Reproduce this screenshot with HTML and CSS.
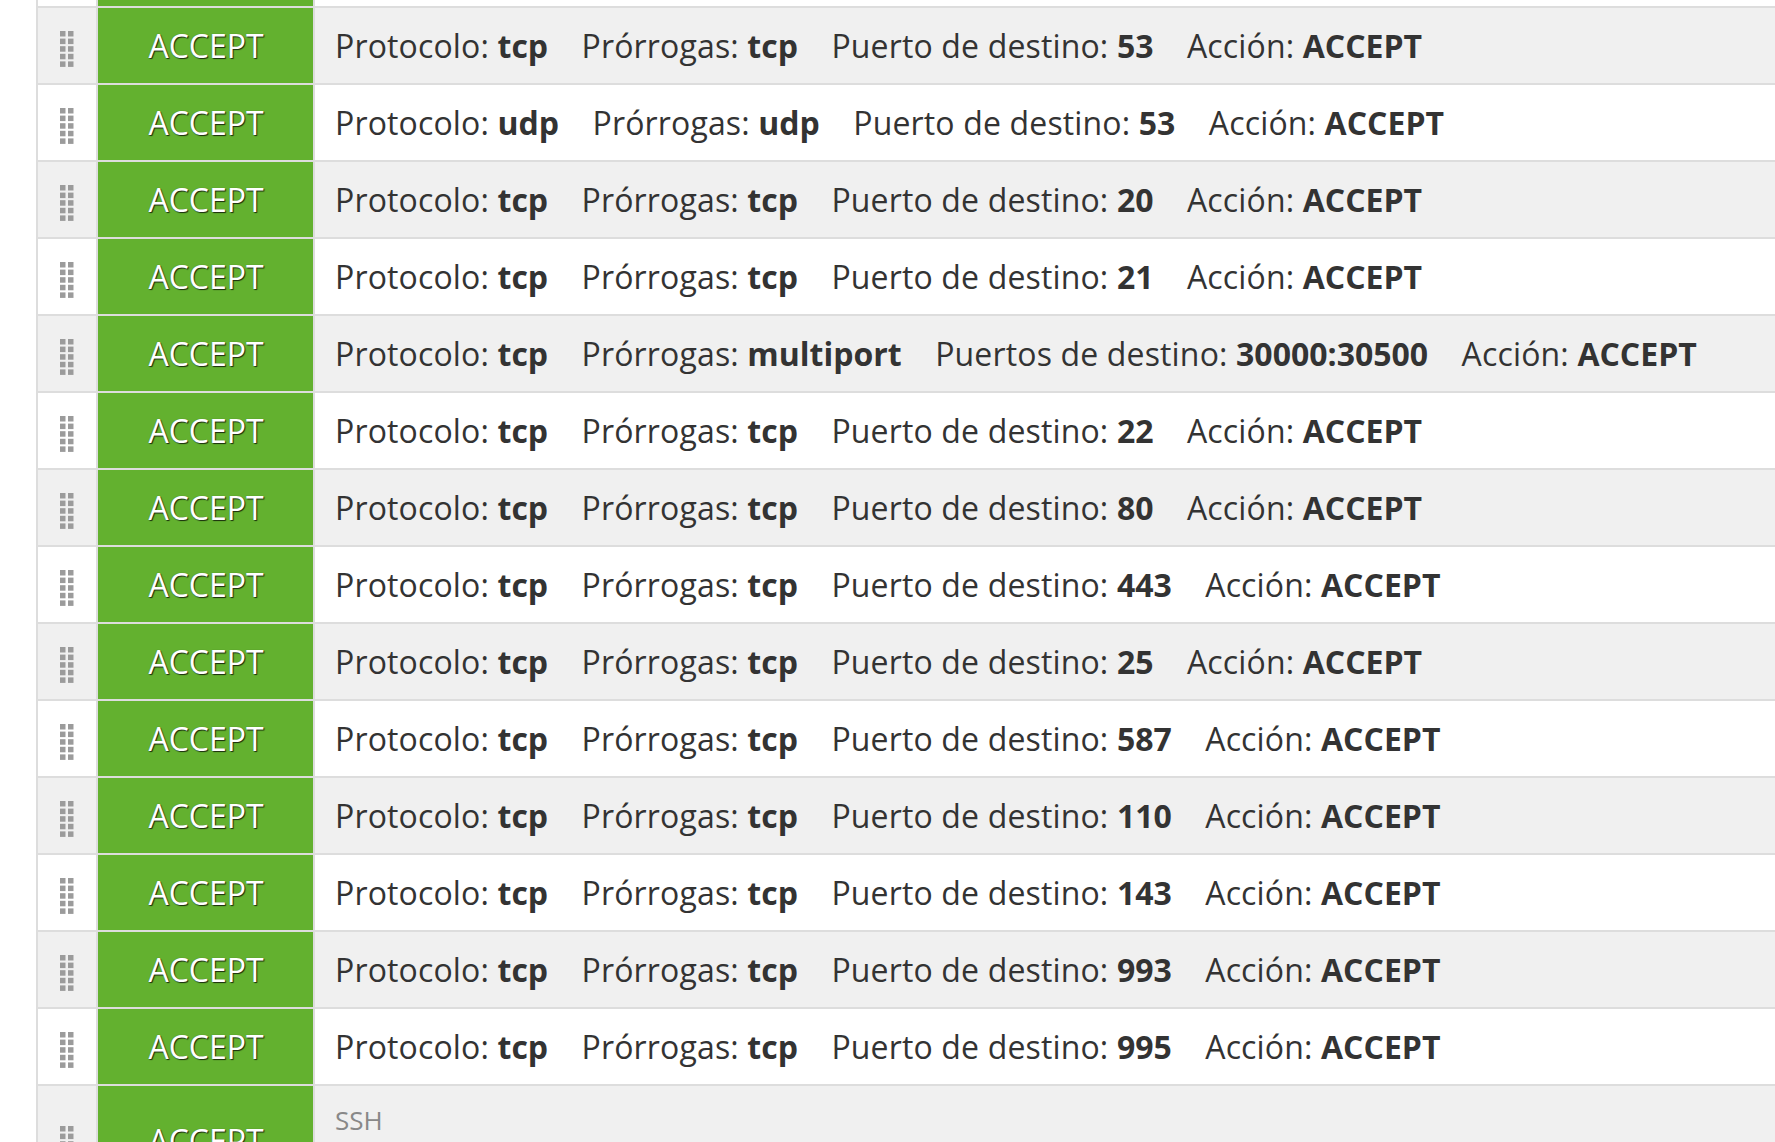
FILE: index.html
```html
<!DOCTYPE html>
<html lang="es">
<head>
<meta charset="utf-8">
<title>Reglas</title>
<link rel="stylesheet" href="styles.css">
</head>
<body>
<div class="rules">
  <div class="rule rule-cut"><div class="handle"></div><div class="target"></div><div class="desc"></div></div>

  <div class="rule"><div class="handle"><svg class="grip" viewBox="0 0 14 36" width="14" height="36"><g fill="#9b9b9b"><rect x="0" y="0" width="5.5" height="5.5"/><rect x="8" y="0" width="5.5" height="5.5"/><rect x="0" y="7.6" width="5.5" height="5.5"/><rect x="8" y="7.6" width="5.5" height="5.5"/><rect x="0" y="15.2" width="5.5" height="5.5"/><rect x="8" y="15.2" width="5.5" height="5.5"/><rect x="0" y="22.8" width="5.5" height="5.5"/><rect x="8" y="22.8" width="5.5" height="5.5"/><rect x="0" y="30.4" width="5.5" height="5.5"/><rect x="8" y="30.4" width="5.5" height="5.5"/></g></svg></div><div class="target">ACCEPT</div><div class="desc"><p class="line"><span class="kv">Protocolo: <b>tcp</b></span> <span class="kv">Prórrogas: <b>tcp</b></span> <span class="kv">Puerto de destino: <b>53</b></span> <span class="kv">Acción: <b>ACCEPT</b></span></p></div></div>

  <div class="rule"><div class="handle"><svg class="grip" viewBox="0 0 14 36" width="14" height="36"><g fill="#9b9b9b"><rect x="0" y="0" width="5.5" height="5.5"/><rect x="8" y="0" width="5.5" height="5.5"/><rect x="0" y="7.6" width="5.5" height="5.5"/><rect x="8" y="7.6" width="5.5" height="5.5"/><rect x="0" y="15.2" width="5.5" height="5.5"/><rect x="8" y="15.2" width="5.5" height="5.5"/><rect x="0" y="22.8" width="5.5" height="5.5"/><rect x="8" y="22.8" width="5.5" height="5.5"/><rect x="0" y="30.4" width="5.5" height="5.5"/><rect x="8" y="30.4" width="5.5" height="5.5"/></g></svg></div><div class="target">ACCEPT</div><div class="desc"><p class="line"><span class="kv">Protocolo: <b>udp</b></span> <span class="kv">Prórrogas: <b>udp</b></span> <span class="kv">Puerto de destino: <b>53</b></span> <span class="kv">Acción: <b>ACCEPT</b></span></p></div></div>

  <div class="rule"><div class="handle"><svg class="grip" viewBox="0 0 14 36" width="14" height="36"><g fill="#9b9b9b"><rect x="0" y="0" width="5.5" height="5.5"/><rect x="8" y="0" width="5.5" height="5.5"/><rect x="0" y="7.6" width="5.5" height="5.5"/><rect x="8" y="7.6" width="5.5" height="5.5"/><rect x="0" y="15.2" width="5.5" height="5.5"/><rect x="8" y="15.2" width="5.5" height="5.5"/><rect x="0" y="22.8" width="5.5" height="5.5"/><rect x="8" y="22.8" width="5.5" height="5.5"/><rect x="0" y="30.4" width="5.5" height="5.5"/><rect x="8" y="30.4" width="5.5" height="5.5"/></g></svg></div><div class="target">ACCEPT</div><div class="desc"><p class="line"><span class="kv">Protocolo: <b>tcp</b></span> <span class="kv">Prórrogas: <b>tcp</b></span> <span class="kv">Puerto de destino: <b>20</b></span> <span class="kv">Acción: <b>ACCEPT</b></span></p></div></div>

  <div class="rule"><div class="handle"><svg class="grip" viewBox="0 0 14 36" width="14" height="36"><g fill="#9b9b9b"><rect x="0" y="0" width="5.5" height="5.5"/><rect x="8" y="0" width="5.5" height="5.5"/><rect x="0" y="7.6" width="5.5" height="5.5"/><rect x="8" y="7.6" width="5.5" height="5.5"/><rect x="0" y="15.2" width="5.5" height="5.5"/><rect x="8" y="15.2" width="5.5" height="5.5"/><rect x="0" y="22.8" width="5.5" height="5.5"/><rect x="8" y="22.8" width="5.5" height="5.5"/><rect x="0" y="30.4" width="5.5" height="5.5"/><rect x="8" y="30.4" width="5.5" height="5.5"/></g></svg></div><div class="target">ACCEPT</div><div class="desc"><p class="line"><span class="kv">Protocolo: <b>tcp</b></span> <span class="kv">Prórrogas: <b>tcp</b></span> <span class="kv">Puerto de destino: <b>21</b></span> <span class="kv">Acción: <b>ACCEPT</b></span></p></div></div>

  <div class="rule"><div class="handle"><svg class="grip" viewBox="0 0 14 36" width="14" height="36"><g fill="#9b9b9b"><rect x="0" y="0" width="5.5" height="5.5"/><rect x="8" y="0" width="5.5" height="5.5"/><rect x="0" y="7.6" width="5.5" height="5.5"/><rect x="8" y="7.6" width="5.5" height="5.5"/><rect x="0" y="15.2" width="5.5" height="5.5"/><rect x="8" y="15.2" width="5.5" height="5.5"/><rect x="0" y="22.8" width="5.5" height="5.5"/><rect x="8" y="22.8" width="5.5" height="5.5"/><rect x="0" y="30.4" width="5.5" height="5.5"/><rect x="8" y="30.4" width="5.5" height="5.5"/></g></svg></div><div class="target">ACCEPT</div><div class="desc"><p class="line"><span class="kv">Protocolo: <b>tcp</b></span> <span class="kv">Prórrogas: <b>multiport</b></span> <span class="kv">Puertos de destino: <b>30000:30500</b></span> <span class="kv">Acción: <b>ACCEPT</b></span></p></div></div>

  <div class="rule"><div class="handle"><svg class="grip" viewBox="0 0 14 36" width="14" height="36"><g fill="#9b9b9b"><rect x="0" y="0" width="5.5" height="5.5"/><rect x="8" y="0" width="5.5" height="5.5"/><rect x="0" y="7.6" width="5.5" height="5.5"/><rect x="8" y="7.6" width="5.5" height="5.5"/><rect x="0" y="15.2" width="5.5" height="5.5"/><rect x="8" y="15.2" width="5.5" height="5.5"/><rect x="0" y="22.8" width="5.5" height="5.5"/><rect x="8" y="22.8" width="5.5" height="5.5"/><rect x="0" y="30.4" width="5.5" height="5.5"/><rect x="8" y="30.4" width="5.5" height="5.5"/></g></svg></div><div class="target">ACCEPT</div><div class="desc"><p class="line"><span class="kv">Protocolo: <b>tcp</b></span> <span class="kv">Prórrogas: <b>tcp</b></span> <span class="kv">Puerto de destino: <b>22</b></span> <span class="kv">Acción: <b>ACCEPT</b></span></p></div></div>

  <div class="rule"><div class="handle"><svg class="grip" viewBox="0 0 14 36" width="14" height="36"><g fill="#9b9b9b"><rect x="0" y="0" width="5.5" height="5.5"/><rect x="8" y="0" width="5.5" height="5.5"/><rect x="0" y="7.6" width="5.5" height="5.5"/><rect x="8" y="7.6" width="5.5" height="5.5"/><rect x="0" y="15.2" width="5.5" height="5.5"/><rect x="8" y="15.2" width="5.5" height="5.5"/><rect x="0" y="22.8" width="5.5" height="5.5"/><rect x="8" y="22.8" width="5.5" height="5.5"/><rect x="0" y="30.4" width="5.5" height="5.5"/><rect x="8" y="30.4" width="5.5" height="5.5"/></g></svg></div><div class="target">ACCEPT</div><div class="desc"><p class="line"><span class="kv">Protocolo: <b>tcp</b></span> <span class="kv">Prórrogas: <b>tcp</b></span> <span class="kv">Puerto de destino: <b>80</b></span> <span class="kv">Acción: <b>ACCEPT</b></span></p></div></div>

  <div class="rule"><div class="handle"><svg class="grip" viewBox="0 0 14 36" width="14" height="36"><g fill="#9b9b9b"><rect x="0" y="0" width="5.5" height="5.5"/><rect x="8" y="0" width="5.5" height="5.5"/><rect x="0" y="7.6" width="5.5" height="5.5"/><rect x="8" y="7.6" width="5.5" height="5.5"/><rect x="0" y="15.2" width="5.5" height="5.5"/><rect x="8" y="15.2" width="5.5" height="5.5"/><rect x="0" y="22.8" width="5.5" height="5.5"/><rect x="8" y="22.8" width="5.5" height="5.5"/><rect x="0" y="30.4" width="5.5" height="5.5"/><rect x="8" y="30.4" width="5.5" height="5.5"/></g></svg></div><div class="target">ACCEPT</div><div class="desc"><p class="line"><span class="kv">Protocolo: <b>tcp</b></span> <span class="kv">Prórrogas: <b>tcp</b></span> <span class="kv">Puerto de destino: <b>443</b></span> <span class="kv">Acción: <b>ACCEPT</b></span></p></div></div>

  <div class="rule"><div class="handle"><svg class="grip" viewBox="0 0 14 36" width="14" height="36"><g fill="#9b9b9b"><rect x="0" y="0" width="5.5" height="5.5"/><rect x="8" y="0" width="5.5" height="5.5"/><rect x="0" y="7.6" width="5.5" height="5.5"/><rect x="8" y="7.6" width="5.5" height="5.5"/><rect x="0" y="15.2" width="5.5" height="5.5"/><rect x="8" y="15.2" width="5.5" height="5.5"/><rect x="0" y="22.8" width="5.5" height="5.5"/><rect x="8" y="22.8" width="5.5" height="5.5"/><rect x="0" y="30.4" width="5.5" height="5.5"/><rect x="8" y="30.4" width="5.5" height="5.5"/></g></svg></div><div class="target">ACCEPT</div><div class="desc"><p class="line"><span class="kv">Protocolo: <b>tcp</b></span> <span class="kv">Prórrogas: <b>tcp</b></span> <span class="kv">Puerto de destino: <b>25</b></span> <span class="kv">Acción: <b>ACCEPT</b></span></p></div></div>

  <div class="rule"><div class="handle"><svg class="grip" viewBox="0 0 14 36" width="14" height="36"><g fill="#9b9b9b"><rect x="0" y="0" width="5.5" height="5.5"/><rect x="8" y="0" width="5.5" height="5.5"/><rect x="0" y="7.6" width="5.5" height="5.5"/><rect x="8" y="7.6" width="5.5" height="5.5"/><rect x="0" y="15.2" width="5.5" height="5.5"/><rect x="8" y="15.2" width="5.5" height="5.5"/><rect x="0" y="22.8" width="5.5" height="5.5"/><rect x="8" y="22.8" width="5.5" height="5.5"/><rect x="0" y="30.4" width="5.5" height="5.5"/><rect x="8" y="30.4" width="5.5" height="5.5"/></g></svg></div><div class="target">ACCEPT</div><div class="desc"><p class="line"><span class="kv">Protocolo: <b>tcp</b></span> <span class="kv">Prórrogas: <b>tcp</b></span> <span class="kv">Puerto de destino: <b>587</b></span> <span class="kv">Acción: <b>ACCEPT</b></span></p></div></div>

  <div class="rule"><div class="handle"><svg class="grip" viewBox="0 0 14 36" width="14" height="36"><g fill="#9b9b9b"><rect x="0" y="0" width="5.5" height="5.5"/><rect x="8" y="0" width="5.5" height="5.5"/><rect x="0" y="7.6" width="5.5" height="5.5"/><rect x="8" y="7.6" width="5.5" height="5.5"/><rect x="0" y="15.2" width="5.5" height="5.5"/><rect x="8" y="15.2" width="5.5" height="5.5"/><rect x="0" y="22.8" width="5.5" height="5.5"/><rect x="8" y="22.8" width="5.5" height="5.5"/><rect x="0" y="30.4" width="5.5" height="5.5"/><rect x="8" y="30.4" width="5.5" height="5.5"/></g></svg></div><div class="target">ACCEPT</div><div class="desc"><p class="line"><span class="kv">Protocolo: <b>tcp</b></span> <span class="kv">Prórrogas: <b>tcp</b></span> <span class="kv">Puerto de destino: <b>110</b></span> <span class="kv">Acción: <b>ACCEPT</b></span></p></div></div>

  <div class="rule"><div class="handle"><svg class="grip" viewBox="0 0 14 36" width="14" height="36"><g fill="#9b9b9b"><rect x="0" y="0" width="5.5" height="5.5"/><rect x="8" y="0" width="5.5" height="5.5"/><rect x="0" y="7.6" width="5.5" height="5.5"/><rect x="8" y="7.6" width="5.5" height="5.5"/><rect x="0" y="15.2" width="5.5" height="5.5"/><rect x="8" y="15.2" width="5.5" height="5.5"/><rect x="0" y="22.8" width="5.5" height="5.5"/><rect x="8" y="22.8" width="5.5" height="5.5"/><rect x="0" y="30.4" width="5.5" height="5.5"/><rect x="8" y="30.4" width="5.5" height="5.5"/></g></svg></div><div class="target">ACCEPT</div><div class="desc"><p class="line"><span class="kv">Protocolo: <b>tcp</b></span> <span class="kv">Prórrogas: <b>tcp</b></span> <span class="kv">Puerto de destino: <b>143</b></span> <span class="kv">Acción: <b>ACCEPT</b></span></p></div></div>

  <div class="rule"><div class="handle"><svg class="grip" viewBox="0 0 14 36" width="14" height="36"><g fill="#9b9b9b"><rect x="0" y="0" width="5.5" height="5.5"/><rect x="8" y="0" width="5.5" height="5.5"/><rect x="0" y="7.6" width="5.5" height="5.5"/><rect x="8" y="7.6" width="5.5" height="5.5"/><rect x="0" y="15.2" width="5.5" height="5.5"/><rect x="8" y="15.2" width="5.5" height="5.5"/><rect x="0" y="22.8" width="5.5" height="5.5"/><rect x="8" y="22.8" width="5.5" height="5.5"/><rect x="0" y="30.4" width="5.5" height="5.5"/><rect x="8" y="30.4" width="5.5" height="5.5"/></g></svg></div><div class="target">ACCEPT</div><div class="desc"><p class="line"><span class="kv">Protocolo: <b>tcp</b></span> <span class="kv">Prórrogas: <b>tcp</b></span> <span class="kv">Puerto de destino: <b>993</b></span> <span class="kv">Acción: <b>ACCEPT</b></span></p></div></div>

  <div class="rule"><div class="handle"><svg class="grip" viewBox="0 0 14 36" width="14" height="36"><g fill="#9b9b9b"><rect x="0" y="0" width="5.5" height="5.5"/><rect x="8" y="0" width="5.5" height="5.5"/><rect x="0" y="7.6" width="5.5" height="5.5"/><rect x="8" y="7.6" width="5.5" height="5.5"/><rect x="0" y="15.2" width="5.5" height="5.5"/><rect x="8" y="15.2" width="5.5" height="5.5"/><rect x="0" y="22.8" width="5.5" height="5.5"/><rect x="8" y="22.8" width="5.5" height="5.5"/><rect x="0" y="30.4" width="5.5" height="5.5"/><rect x="8" y="30.4" width="5.5" height="5.5"/></g></svg></div><div class="target">ACCEPT</div><div class="desc"><p class="line"><span class="kv">Protocolo: <b>tcp</b></span> <span class="kv">Prórrogas: <b>tcp</b></span> <span class="kv">Puerto de destino: <b>995</b></span> <span class="kv">Acción: <b>ACCEPT</b></span></p></div></div>

  <div class="rule"><div class="handle"><svg class="grip" viewBox="0 0 14 36" width="14" height="36"><g fill="#9b9b9b"><rect x="0" y="0" width="5.5" height="5.5"/><rect x="8" y="0" width="5.5" height="5.5"/><rect x="0" y="7.6" width="5.5" height="5.5"/><rect x="8" y="7.6" width="5.5" height="5.5"/><rect x="0" y="15.2" width="5.5" height="5.5"/><rect x="8" y="15.2" width="5.5" height="5.5"/><rect x="0" y="22.8" width="5.5" height="5.5"/><rect x="8" y="22.8" width="5.5" height="5.5"/><rect x="0" y="30.4" width="5.5" height="5.5"/><rect x="8" y="30.4" width="5.5" height="5.5"/></g></svg></div><div class="target">ACCEPT</div><div class="desc desc-labeled"><p class="comment">SSH</p><p class="line"><span class="kv">Protocolo: <b>tcp</b></span> <span class="kv">Prórrogas: <b>tcp</b></span> <span class="kv">Puerto de destino: <b>22</b></span> <span class="kv">Acción: <b>ACCEPT</b></span></p></div></div>
</div>
</body>
</html>
```

FILE: styles.css
```css
html, body {
  margin: 0;
  padding: 0;
  background: #ffffff;
}

body {
  font-family: "Open Sans", "Liberation Sans", sans-serif;
  color: #333333;
  overflow: hidden;
}

.rules {
  margin-left: 36px;
  border-left: 2px solid #dddddd;
  background: #dddddd;
  display: flex;
  flex-direction: column;
  row-gap: 2px;
}

.rule {
  display: grid;
  grid-template-columns: 58px 215px 1fr;
  column-gap: 2px;
  min-height: 75px;
}

.rule-cut {
  min-height: 0;
  height: 6px;
}

.rule > .handle,
.rule > .desc {
  background: #ffffff;
}

.rule:nth-child(even) > .handle,
.rule:nth-child(even) > .desc {
  background: #f0f0f0;
}

.handle {
  display: flex;
  justify-content: center;
  align-items: center;
  padding-top: 6px;
  box-sizing: border-box;
}

.grip {
  display: block;
  filter: blur(0.5px);
}

.target {
  background: #63b12f;
  color: #ffffff;
  font-size: 32px;
  display: flex;
  justify-content: center;
  align-items: center;
  padding-left: 1px;
  text-shadow: 1px 1px 1px rgba(0, 0, 0, 0.75), 0 0 1px rgba(0, 0, 0, 0.35);
}

.desc {
  padding: 16px 21px 16px 20px;
  display: flex;
  flex-direction: column;
  justify-content: center;
  white-space: nowrap;
  overflow: hidden;
}

.rule-cut > .desc,
.rule-cut > .handle {
  padding: 0;
}

.line {
  margin: 0;
  font-size: 32px;
  line-height: 43px;
  letter-spacing: 0.15px;
}

.kv {
  margin-right: 25px;
}

.kv b {
  font-weight: 700;
  letter-spacing: 0;
}

.comment {
  margin: 2px 0 0;
  font-size: 26px;
  line-height: 32px;
  color: #888888;
}
```
